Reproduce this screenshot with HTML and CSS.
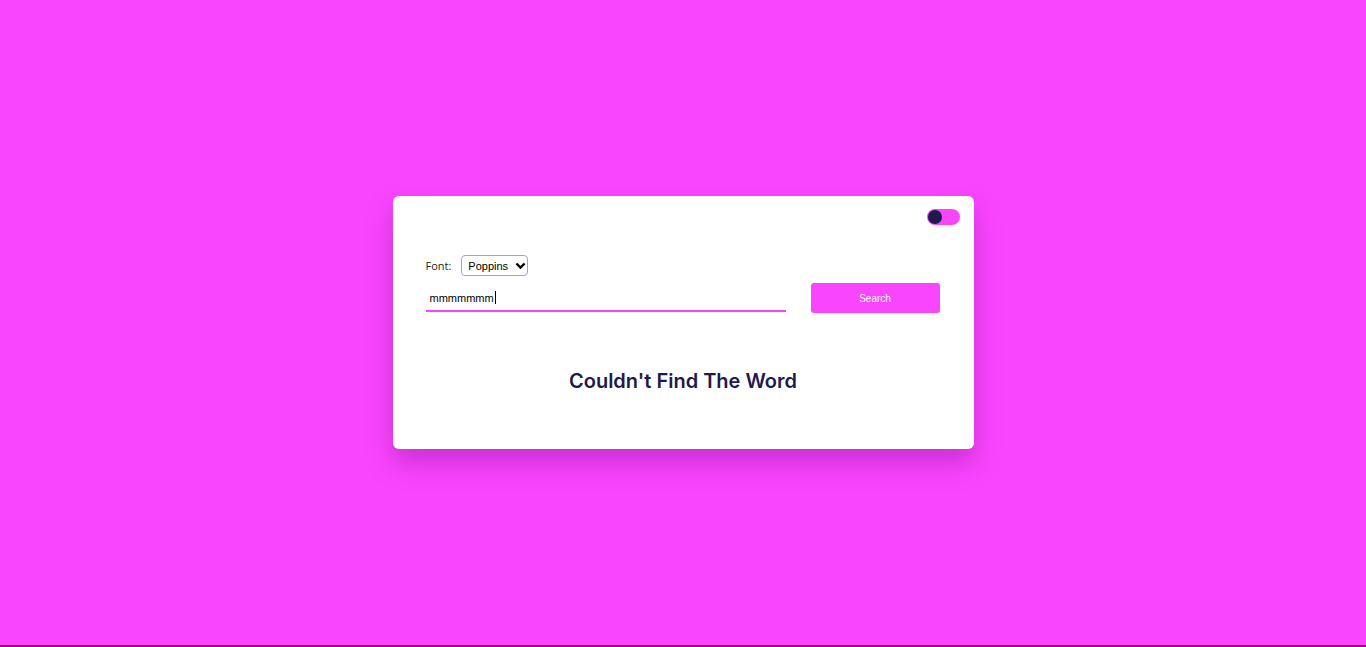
FILE: index.html
```html
<!DOCTYPE html>
<html>
<head>
<meta charset="utf-8">
<link rel="stylesheet" href="styles.css">
</head>
<body>
<main class="page">
  <section class="card">
    <div class="top">
      <span class="toggle"><span class="knob"></span></span>
    </div>
    <div class="font-row">
      <label class="font-label">Font:</label>
      <span class="select">Poppins
        <svg class="chev" width="11" height="8" viewBox="0 0 11 8"><path d="M1.4 1.5 L5.5 5.6 L9.6 1.5" fill="none" stroke="#000" stroke-width="2.4"/></svg>
      </span>
    </div>
    <div class="search-row">
      <div class="input"><span class="typed">mmmmmmm</span><span class="caret"></span></div>
      <button class="btn">Search</button>
    </div>
    <h2 class="msg">Couldn't Find The Word</h2>
  </section>
</main>
</body>
</html>
```
FILE: styles.css
```css
html, body { margin: 0; padding: 0; }
body {
  background: #fa45ff;
  border-bottom: 2px solid #a0006f;
  height: calc(100vh - 2px);
}
.page {
  height: 100%;
  display: flex;
  align-items: center;
  justify-content: center;
}
.card {
  box-sizing: border-box;
  width: 581px;
  height: 253px;
  background: #fff;
  border-radius: 6px;
  box-shadow: 0 14px 26px rgba(140, 20, 150, 0.42);
  padding: 13px 14px 0 33px;
  display: flex;
  flex-direction: column;
}
.top { display: flex; justify-content: flex-end; height: 16px; }
.toggle {
  width: 33px; height: 16px; border-radius: 8px;
  background: #fa45ff; display: flex; align-items: center; padding-left: 1px; box-sizing: border-box;
}
.knob { width: 14px; height: 14px; border-radius: 50%; background: #1f1a4c; }
.font-row { display: flex; align-items: center; margin-top: 30px; height: 21px; }
.font-label { font-family: "Open Sans", sans-serif; font-size: 11px; color: #222; margin-right: 9px; }
.select {
  box-sizing: border-box; height: 21px; width: 67px; margin-left: 1px;
  border: 1px solid #a89ae8; border-radius: 4px;
  font-family: "Liberation Sans", Arial, sans-serif; font-size: 11px; color: #000;
  display: flex; align-items: center; padding-left: 6px; gap: 7px;
}
.search-row { display: flex; align-items: flex-start; margin-top: 7px; padding-right: 20px; }
.input {
  box-sizing: border-box; width: 360px; height: 29px;
  border-bottom: 2px solid #fa45ff;
  display: flex; align-items: center; padding-left: 4px; padding-top: 2px;
  font-family: "Liberation Sans", Arial, sans-serif; font-size: 11px; color: #000;
}
.caret { width: 1px; height: 13px; background: #000; margin-left: 1px; }
.btn {
  margin-left: 25px; width: 129px; height: 30px;
  background: #fa45ff; color: #fff; border: none; border-radius: 3px;
  font-family: "Liberation Sans", Arial, sans-serif; font-size: 10px;
}
.msg {
  margin: 56px 19px 0 0; text-align: center;
  font-family: Inter, "Open Sans", sans-serif; font-weight: 600; font-size: 20px;
  color: #1f1a4c; letter-spacing: 0;
}
```
